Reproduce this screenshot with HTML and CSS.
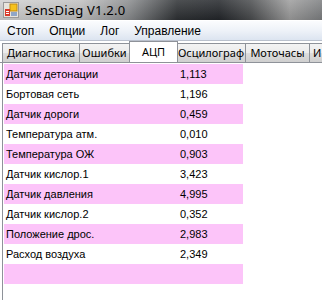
FILE: index.html
```html
<!DOCTYPE html>
<html lang="ru">

<head>
    <meta charset="UTF-8">
    <title>SensDiag V1.2.0</title>
    <link rel="stylesheet" href="styles.css">
</head>

<body>
    <div class="window">
        <!-- Title bar -->
        <div class="titlebar">
            <svg class="app-icon" width="16" height="16" viewBox="0 0 16 16">
                <rect x="0.5" y="0.5" width="15" height="15" fill="#e8e4dc" stroke="#9a9a9a" />
                <rect x="7" y="2" width="7" height="7" fill="#f6c21c" stroke="#c08a10" />
                <rect x="2" y="7" width="5" height="7" fill="#d83a2a" />
                <rect x="3" y="9" width="3" height="1" fill="#ffffff" />
                <rect x="3" y="11" width="3" height="1" fill="#ffffff" />
                <rect x="8" y="10" width="6" height="4" fill="#8fa6c8" />
            </svg>
            <span class="title">SensDiag V1.2.0</span>
        </div>

        <!-- Menu -->
        <div class="menubar">
            <span class="menu-item">Стоп</span>
            <span class="menu-item">Опции</span>
            <span class="menu-item">Лог</span>
            <span class="menu-item">Управление</span>
        </div>

        <!-- Tabs -->
        <div class="tabs">
            <div class="tab tab-diag">Диагностика</div>
            <div class="tab tab-err">Ошибки</div>
            <div class="tab tab-adc active">АЦП</div>
            <div class="tab tab-osc">Осцилограф</div>
            <div class="tab tab-hours">Моточасы</div>
            <div class="tab tab-more">И</div>
        </div>

        <!-- ADC values -->
        <div class="page">
            <div class="row pink"><span class="name">Датчик детонации</span><span class="value">1,113</span></div>
            <div class="row"><span class="name">Бортовая сеть</span><span class="value">1,196</span></div>
            <div class="row pink"><span class="name">Датчик дороги</span><span class="value">0,459</span></div>
            <div class="row"><span class="name">Температура атм.</span><span class="value">0,010</span></div>
            <div class="row pink"><span class="name">Температура ОЖ</span><span class="value">0,903</span></div>
            <div class="row"><span class="name">Датчик кислор.1</span><span class="value">3,423</span></div>
            <div class="row pink"><span class="name">Датчик давления</span><span class="value">4,995</span></div>
            <div class="row"><span class="name">Датчик кислор.2</span><span class="value">0,352</span></div>
            <div class="row pink"><span class="name">Положение дрос.</span><span class="value">2,983</span></div>
            <div class="row"><span class="name">Расход воздуха</span><span class="value">2,349</span></div>
            <div class="row pink"><span class="name"></span><span class="value"></span></div>
        </div>
    </div>
</body>

</html>
```

FILE: styles.css
```css
* {
    box-sizing: border-box;
    margin: 0;
    padding: 0;
}

body {
    width: 322px;
    height: 300px;
    overflow: hidden;
    background-color: #ffffff;
    font-family: "Liberation Sans", Arial, sans-serif;
    font-size: 12px;
    color: #000;
}

.window {
    display: flex;
    flex-direction: column;
}

/* Aero-like glass title */
.titlebar {
    height: 20px;
    display: flex;
    align-items: center;
    gap: 6px;
    padding-left: 3px;
    background:
        linear-gradient(to bottom, rgba(255, 255, 255, 0.15), rgba(0, 0, 0, 0.1)),
        linear-gradient(to right, #d2d2d2 0%, #c0c0c0 25%, #8a8c8e 40%, #2e3134 55%, #23262a 68%, #4a4c4e 78%, #9d9d9d 90%, #7c7e80 100%);
}

.app-icon {
    flex-shrink: 0;
}

.title {
    font-family: "Noto Sans", sans-serif;
    font-size: 13px;
    letter-spacing: 0.2px;
    color: #000;
}

.menubar {
    height: 21px;
    display: flex;
    align-items: center;
    padding-left: 7px;
    border-top: 1px solid #ffffff;
    border-bottom: 1px solid #b9c0cc;
    background: linear-gradient(to bottom, #fbfcfe 0%, #eef2f8 50%, #dce4f0 100%);
}

.menu-item {
    margin-right: 15px;
}

.tabs {
    height: 22px;
    display: flex;
    align-items: flex-end;
    padding-left: 2px;
    border-bottom: 1px solid #8e9299;
    overflow: hidden;
    font-family: "Noto Sans", sans-serif;
    font-size: 11px;
}

.tab {
    flex-shrink: 0;
    height: 19px;
    padding-bottom: 1px;
    display: flex;
    align-items: center;
    justify-content: center;
    white-space: nowrap;
    border: 1px solid #8e9299;
    border-bottom: none;
    border-left: none;
    background: linear-gradient(to bottom, #f3f3f3 0%, #ebebeb 50%, #dddddd 51%, #cfcfcf 100%);
}

.tab-diag {
    width: 78px;
    border-left: 1px solid #8e9299;
}

.tab-err {
    width: 50px;
}

.tab-adc {
    width: 49px;
}

.tab-osc {
    width: 69px;
}

.tab-hours {
    width: 64px;
}

.tab-more {
    width: 20px;
    justify-content: flex-start;
    padding-left: 3px;
}

.tab.active {
    height: 22px;
    margin-bottom: -1px;
    margin-left: -1px;
    margin-right: -1px;
    padding-bottom: 3px;
    background: #ffffff;
    border-left: 1px solid #8e9299;
    position: relative;
}

.page {
    padding: 1px 0 0 1px;
    margin-left: 2px;
    border-left: 1px solid #8e9299;
    height: 240px;
}

.row {
    width: 239px;
    height: 20px;
    display: flex;
    align-items: center;
    padding-left: 2px;
    font-size: 11px;
}

.row.pink {
    background-color: #fcc4f9;
}

.name {
    width: 174px;
}
```
